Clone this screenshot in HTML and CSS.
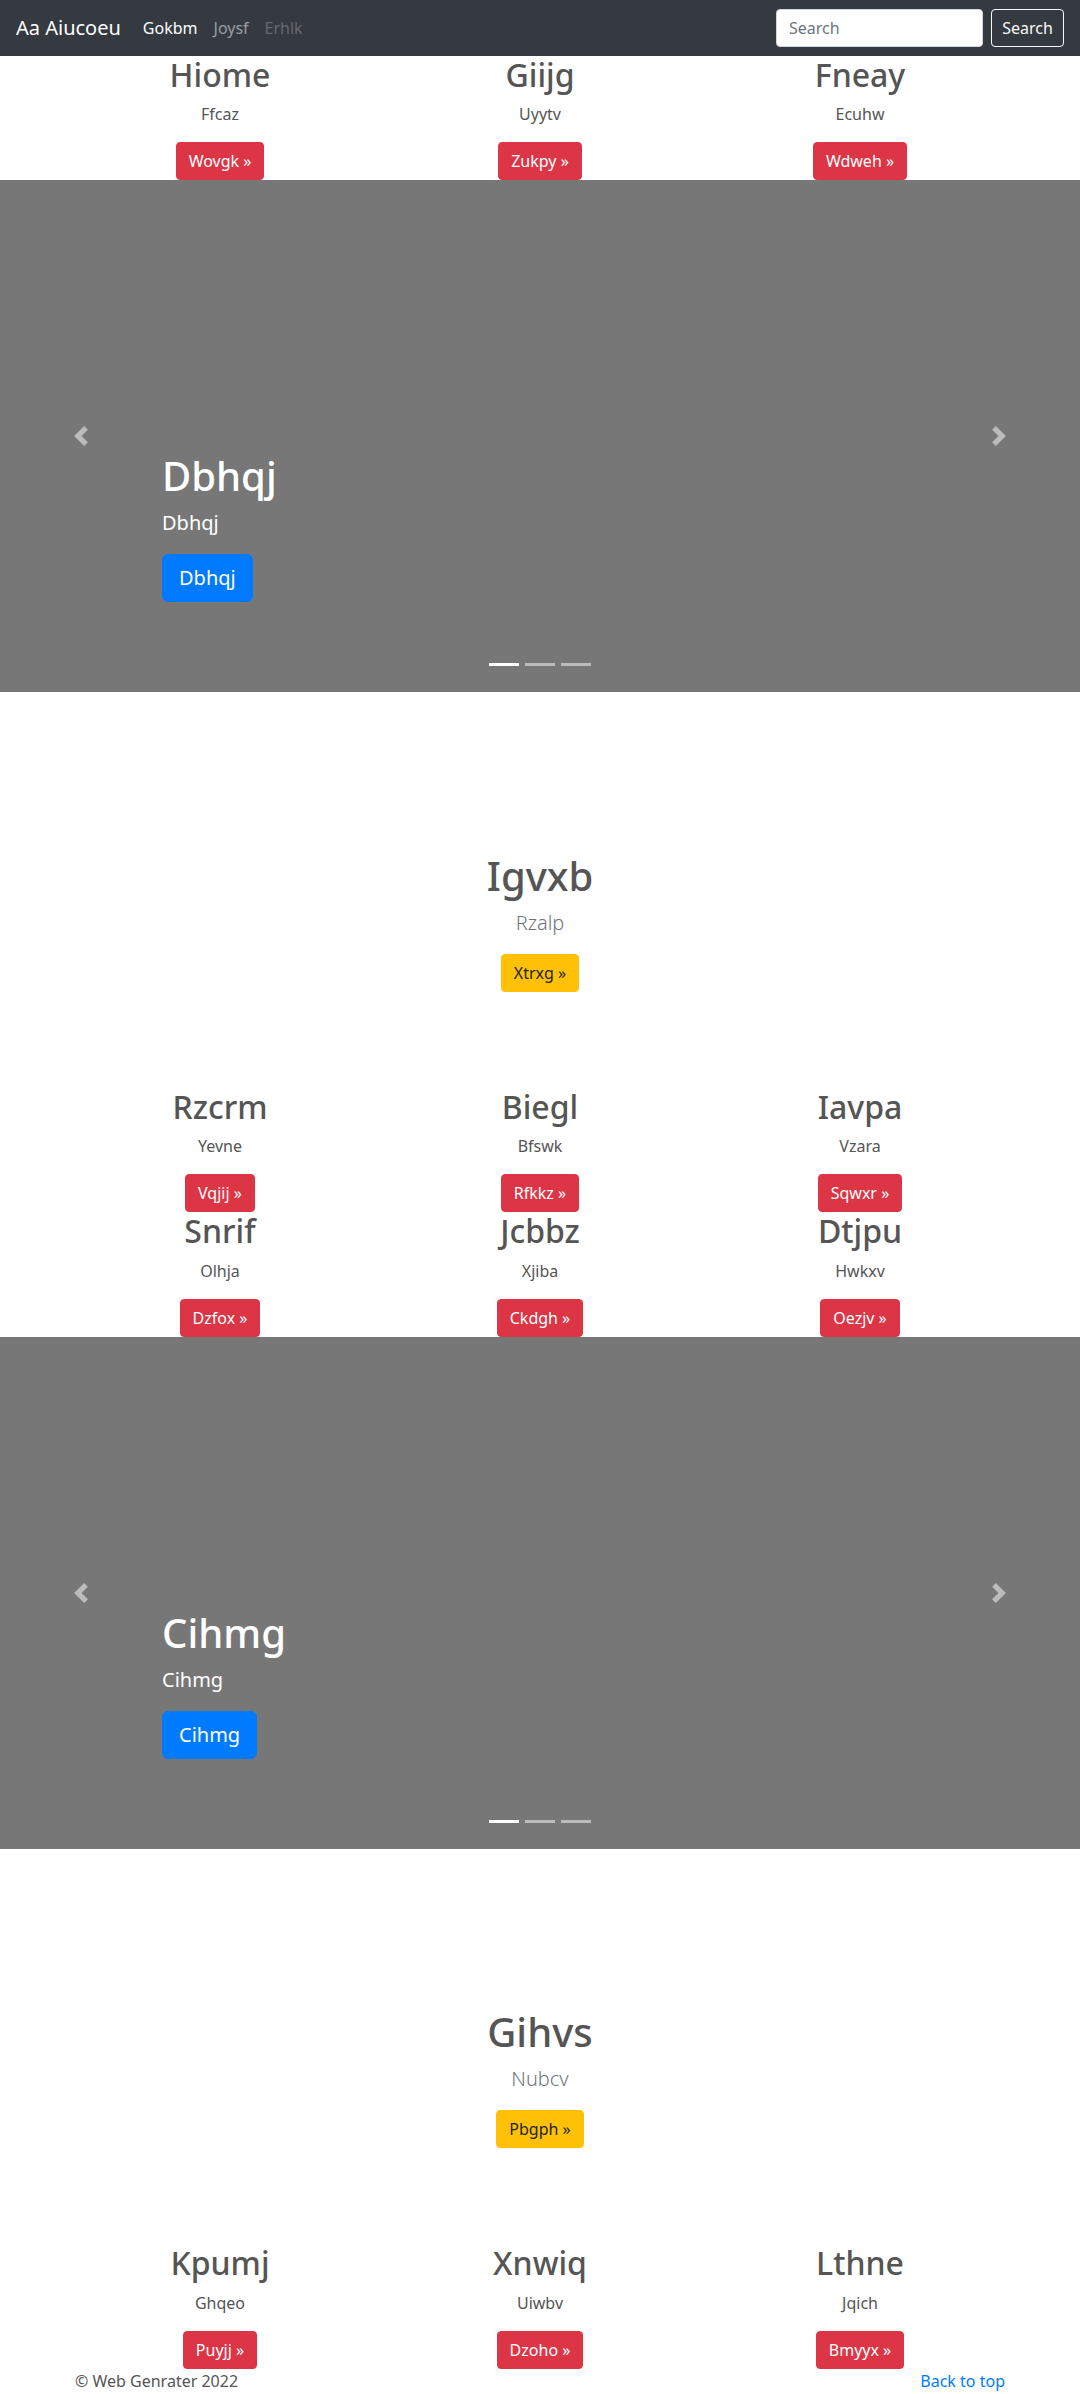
FILE: index.html
```html
<!DOCTYPE html>
<html lang="en">
<head>
<meta charset="utf-8">
<title>Aa Aiucoeu</title>
<link rel="stylesheet" href="styles.css">
</head>
<body>
<nav class="navbar">
  <a class="brand" href="#">Aa Aiucoeu</a>
  <ul class="nav">
    <li><a class="nav-link active" href="#">Gokbm</a></li>
    <li><a class="nav-link" href="#">Joysf</a></li>
    <li><a class="nav-link disabled" href="#">Erhlk</a></li>
  </ul>
  <form class="search">
    <input class="search-input" type="text" placeholder="Search">
    <button class="search-btn" type="button">Search</button>
  </form>
</nav>

<main>
  <div class="container">
    <div class="row">
      <div class="col"><h2>Hiome</h2><p>Ffcaz</p><p class="act"><a class="btn btn-danger" href="#">Wovgk &raquo;</a></p></div>
      <div class="col"><h2>Giijg</h2><p>Uyytv</p><p class="act"><a class="btn btn-danger" href="#">Zukpy &raquo;</a></p></div>
      <div class="col"><h2>Fneay</h2><p>Ecuhw</p><p class="act"><a class="btn btn-danger" href="#">Wdweh &raquo;</a></p></div>
    </div>
  </div>

  <div class="carousel">
    <a class="ctrl ctrl-prev" href="#"><svg width="20" height="20" viewBox="0 0 8 8"><path fill="#fff" d="M5.25 0l-4 4 4 4 1.5-1.5L4.25 4l2.5-2.5L5.25 0z"/></svg></a>
    <a class="ctrl ctrl-next" href="#"><svg width="20" height="20" viewBox="0 0 8 8"><path fill="#fff" d="M2.75 0l-1.5 1.5L3.75 4l-2.5 2.5L2.75 8l4-4-4-4z"/></svg></a>
    <div class="caption">
      <h1>Dbhqj</h1>
      <p>Dbhqj</p>
      <p><a class="btn btn-lg btn-primary" href="#">Dbhqj</a></p>
    </div>
    <ol class="indicators"><li class="on"></li><li></li><li></li></ol>
  </div>

  <section class="hero">
    <h1>Igvxb</h1>
    <p class="lead">Rzalp</p>
    <p class="act"><a class="btn btn-warning" href="#">Xtrxg &raquo;</a></p>
  </section>

  <div class="container">
    <div class="row">
      <div class="col"><h2>Rzcrm</h2><p>Yevne</p><p class="act"><a class="btn btn-danger" href="#">Vqjij &raquo;</a></p></div>
      <div class="col"><h2>Biegl</h2><p>Bfswk</p><p class="act"><a class="btn btn-danger" href="#">Rfkkz &raquo;</a></p></div>
      <div class="col"><h2>Iavpa</h2><p>Vzara</p><p class="act"><a class="btn btn-danger" href="#">Sqwxr &raquo;</a></p></div>
      <div class="col"><h2>Snrif</h2><p>Olhja</p><p class="act"><a class="btn btn-danger" href="#">Dzfox &raquo;</a></p></div>
      <div class="col"><h2>Jcbbz</h2><p>Xjiba</p><p class="act"><a class="btn btn-danger" href="#">Ckdgh &raquo;</a></p></div>
      <div class="col"><h2>Dtjpu</h2><p>Hwkxv</p><p class="act"><a class="btn btn-danger" href="#">Oezjv &raquo;</a></p></div>
    </div>
  </div>

  <div class="carousel">
    <a class="ctrl ctrl-prev" href="#"><svg width="20" height="20" viewBox="0 0 8 8"><path fill="#fff" d="M5.25 0l-4 4 4 4 1.5-1.5L4.25 4l2.5-2.5L5.25 0z"/></svg></a>
    <a class="ctrl ctrl-next" href="#"><svg width="20" height="20" viewBox="0 0 8 8"><path fill="#fff" d="M2.75 0l-1.5 1.5L3.75 4l-2.5 2.5L2.75 8l4-4-4-4z"/></svg></a>
    <div class="caption">
      <h1>Cihmg</h1>
      <p>Cihmg</p>
      <p><a class="btn btn-lg btn-primary" href="#">Cihmg</a></p>
    </div>
    <ol class="indicators"><li class="on"></li><li></li><li></li></ol>
  </div>

  <section class="hero">
    <h1>Gihvs</h1>
    <p class="lead">Nubcv</p>
    <p class="act"><a class="btn btn-warning" href="#">Pbgph &raquo;</a></p>
  </section>

  <div class="container">
    <div class="row">
      <div class="col"><h2>Kpumj</h2><p>Ghqeo</p><p class="act"><a class="btn btn-danger" href="#">Puyjj &raquo;</a></p></div>
      <div class="col"><h2>Xnwiq</h2><p>Uiwbv</p><p class="act"><a class="btn btn-danger" href="#">Dzoho &raquo;</a></p></div>
      <div class="col"><h2>Lthne</h2><p>Jqich</p><p class="act"><a class="btn btn-danger" href="#">Bmyyx &raquo;</a></p></div>
    </div>
  </div>

  <footer class="footer">
    <p>&copy; Web Genrater 2022</p>
    <p><a class="top-link" href="#">Back to top</a></p>
  </footer>
</main>
</body>
</html>
```

FILE: styles.css
```css
* { box-sizing: border-box; }

body {
  margin: 0;
  font-family: "Noto Sans", "Open Sans", "DejaVu Sans", sans-serif;
  font-size: 16px;
  line-height: 1.5;
  color: #555;
  background: #fff;
}

/* navbar */
.navbar {
  display: flex;
  align-items: center;
  height: 56px;
  padding: 8px 16px;
  background: #343a40;
}
.brand {
  font-size: 20px;
  line-height: 30px;
  padding: 5px 0;
  margin-right: 14px;
  color: #fff;
  text-decoration: none;
}
.nav {
  display: flex;
  flex: 1;
  list-style: none;
  margin: 0;
  padding: 0;
}
.nav-link {
  display: block;
  padding: 8px;
  color: rgba(255, 255, 255, .5);
  text-decoration: none;
}
.nav-link.active { color: #fff; }
.nav-link.disabled { color: rgba(255, 255, 255, .25); }

.search {
  display: flex;
  gap: 8px;
  margin: 0;
}
.search-input {
  width: 207px;
  height: 38px;
  padding: 6px 12px;
  font: inherit;
  color: #495057;
  background: #fff;
  border: 1px solid #ced4da;
  border-radius: 4px;
}
.search-input::placeholder { color: #6c757d; }
.search-btn {
  width: 73px;
  height: 38px;
  padding: 6px 0;
  font: inherit;
  color: #f8f9fa;
  background: transparent;
  border: 1px solid #f8f9fa;
  border-radius: 4px;
}

/* marketing columns */
.container {
  width: 960px;
  margin: 0 auto;
}
.row {
  display: flex;
  flex-wrap: wrap;
}
.col {
  width: 320px;
  padding: 0 15px;
  text-align: center;
}
.col h2 {
  font-size: 32px;
  font-weight: 500;
  line-height: 1.2;
  margin: 0 0 8px;
}
.col p { margin: 0 0 16px; }
.col p.act, .hero p.act { margin: 0; }

.btn {
  display: inline-block;
  font-size: 16px;
  line-height: 24px;
  padding: 6px 12px;
  border: 1px solid transparent;
  border-radius: 4px;
  text-decoration: none;
}
.btn-danger { background: #dc3545; border-color: #dc3545; color: #fff; }
.btn-warning { background: #ffc107; border-color: #ffc107; color: #212529; }
.btn-primary { background: #007bff; border-color: #007bff; color: #fff; }
.btn-lg {
  font-size: 20px;
  line-height: 30px;
  padding: 8px 16px;
  border-radius: 6px;
}

/* carousel */
.carousel {
  position: relative;
  height: 512px;
  background: #777;
}
.ctrl {
  position: absolute;
  top: 0;
  bottom: 0;
  width: 15%;
  display: flex;
  align-items: center;
  justify-content: center;
  opacity: .5;
}
.ctrl-prev { left: 0; }
.ctrl-next { right: 0; }
.caption {
  position: absolute;
  left: 15%;
  right: 15%;
  bottom: 54px;
  padding: 20px 0;
  color: #fff;
}
.caption h1 {
  font-size: 40px;
  font-weight: 500;
  line-height: 48px;
  margin: 0 0 8px;
}
.caption p {
  font-size: 20px;
  line-height: 30px;
  margin: 0 0 16px;
}
.indicators {
  position: absolute;
  left: 0;
  right: 0;
  bottom: 26px;
  display: flex;
  justify-content: center;
  gap: 6px;
  list-style: none;
  margin: 0;
  padding: 0;
}
.indicators li {
  width: 30px;
  height: 3px;
  background: #fff;
  opacity: .5;
}
.indicators li.on { opacity: 1; }

/* hero */
.hero {
  text-align: center;
  padding: 159.4px 0 96.2px;
}
.hero h1 {
  font-size: 40px;
  font-weight: 500;
  line-height: 48px;
  margin: 0 0 8px;
}
.hero .lead {
  font-size: 20px;
  font-weight: 300;
  line-height: 30px;
  color: #6c757d;
  margin: 0 0 16px;
}

/* footer */
.footer {
  width: 960px;
  margin: 0 auto;
  padding: 0 15px;
  display: flex;
  justify-content: space-between;
}
.footer p { margin: 0; }
.top-link { color: #007bff; text-decoration: none; }
```
